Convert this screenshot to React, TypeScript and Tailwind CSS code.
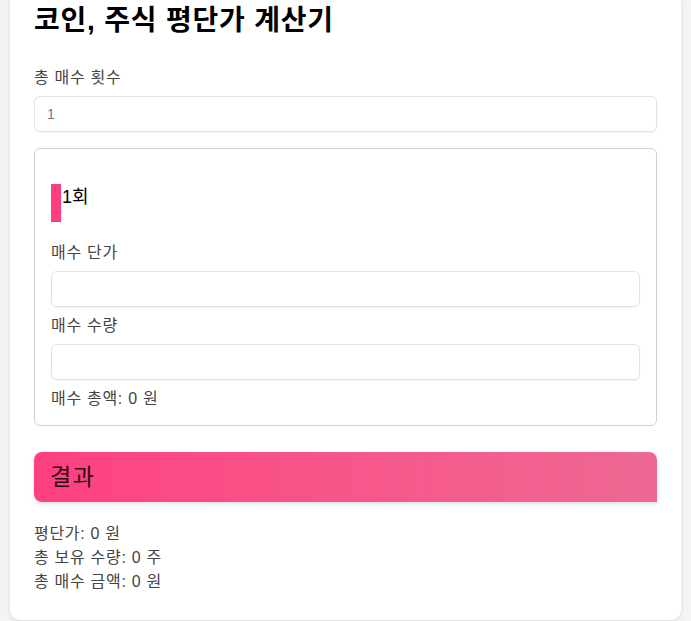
import { useState } from "react";

const font = { fontFamily: '"Liberation Sans", "Noto Sans CJK KR", sans-serif' };

const inputCls =
  "mt-[7px] w-full h-[36px] px-3 text-[14px] font-['Liberation_Sans',sans-serif] border border-[#e2e2e2] rounded-[6px] shadow-[0_1px_2px_rgba(0,0,0,0.05)] placeholder:text-[#777] outline-none";
const textCls = "text-[16px] tracking-[0.7px] leading-[22px] text-[#444]";

export default function App() {
  const [count, setCount] = useState("");
  const [price, setPrice] = useState("");
  const [qty, setQty] = useState("");

  const total = (Number(price) || 0) * (Number(qty) || 0);
  const avg = Number(qty) ? total / Number(qty) : 0;

  return (
    <div className="min-h-[621px] bg-[#f4f4f4] px-[10px] pb-[2px]" style={font}>
      <div className="bg-white rounded-b-[10px] shadow-[0_1px_4px_rgba(0,0,0,0.12)] px-6 pt-[2px] pb-[26px]">
        <h1 className="text-[28px] font-bold tracking-[0.8px] leading-[38px] text-black">코인, 주식 평단가 계산기</h1>

        <label className={`block mt-[27px] ${textCls}`}>총 매수 횟수</label>
        <input value={count} onChange={(e) => setCount(e.target.value)} placeholder="1" className={inputCls} />

        <div className="mt-4 border border-[#cfcfcf] rounded-[6px] px-4 pt-[35px] pb-[15px]">
          <div className="flex items-stretch h-[38px]">
            <div className="w-[10px] bg-[#ff3d7f]" />
            <span className="ml-[1px] text-[18px] leading-[24px] text-black pt-[1px]">1회</span>
          </div>

          <label className={`block mt-[20px] ${textCls}`}>매수 단가</label>
          <input value={price} onChange={(e) => setPrice(e.target.value)} className={inputCls} />

          <label className={`block mt-[8px] ${textCls}`}>매수 수량</label>
          <input value={qty} onChange={(e) => setQty(e.target.value)} className={inputCls} />

          <p className={`mt-[8px] ${textCls}`}>매수 총액: {total} 원</p>
        </div>

        <div className="mt-[26px] h-[50px] flex items-center px-4 rounded-t-[8px] rounded-bl-[8px] bg-gradient-to-r from-[#ff3f80] to-[#ee6893] shadow-[0_2px_4px_rgba(0,0,0,0.12)]">
          <span className="text-[23px] tracking-[1.5px] text-[#2a0a14]">결과</span>
        </div>

        <div className="mt-[20px] text-[16px] tracking-[0.7px] leading-[24px] text-[#444]">
          <p>평단가: {avg} 원</p>
          <p>총 보유 수량: {Number(qty) || 0} 주</p>
          <p>총 매수 금액: {total} 원</p>
        </div>
      </div>
    </div>
  );
}
